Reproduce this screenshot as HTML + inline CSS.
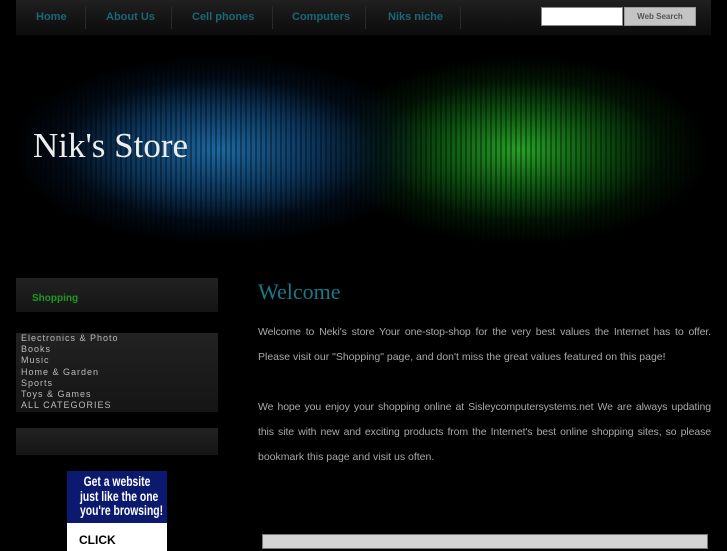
<!DOCTYPE html>
<html><head><meta charset="utf-8"><style>
*{margin:0;padding:0;box-sizing:border-box}
body{width:727px;height:545px;overflow:hidden;background:#000;font-family:"Liberation Sans",sans-serif;position:relative}
.nav{position:absolute;left:16px;top:0;width:695px;height:35px;background:linear-gradient(#202020,#161616 45%,#0c0c0c)}
.nav a{position:absolute;top:11px;font-size:11px;font-weight:bold;color:#1a6775;text-decoration:none}
.sep{position:absolute;top:6px;width:1px;height:23px;background:#2a2a2a}
.search{position:absolute;left:541px;top:7px;width:82px;height:19px;background:#fff;border:1px solid #888}
.btn{position:absolute;left:624px;top:7px;width:72px;height:19px;background:#c4c4c4;border:1px solid #999;font-size:8px;font-weight:bold;color:#555;text-align:center;line-height:17px}
.banner{position:absolute;left:20px;top:55px;width:690px;height:190px;
background:radial-gradient(ellipse 210px 95px at 200px 95px,rgba(30,110,170,.95),rgba(15,70,120,.75) 45%,rgba(5,30,60,.4) 75%,transparent 100%),
radial-gradient(ellipse 190px 95px at 500px 95px,rgba(40,170,40,.95),rgba(15,100,20,.75) 45%,rgba(5,50,10,.4) 75%,transparent 100%)}
.banner:after{content:"";position:absolute;inset:0;background:repeating-linear-gradient(90deg,rgba(0,0,0,.35) 0 2px,transparent 2px 5px)}
.title{position:absolute;left:33px;top:126px;font-family:"Liberation Serif",serif;font-size:35px;color:#eee}
.box{position:absolute;left:16px;width:202px;background:linear-gradient(#222 0,#1a1a1a 60%,#151515)}
.cat{position:absolute;left:21px;font-size:9px;color:#bbb;letter-spacing:1px}
h1{position:absolute;left:258px;top:279px;font-family:"Liberation Serif",serif;font-weight:normal;font-size:22px;color:#1a7888}
.l{position:absolute;left:258px;width:453px;font-size:10.5px;color:#a8a8a8;line-height:14px;white-space:nowrap}
.j{text-align:justify;text-align-last:justify;white-space:normal;letter-spacing:-0.1px}
.ad{position:absolute;left:67px;top:471px;width:100px;height:80px;background:#0b1a6e;overflow:hidden}
.ad span{position:absolute;left:0;top:3px;width:100px;color:#fff;font-weight:bold;font-size:14px;text-align:center;line-height:14.5px;transform:scaleX(.74);white-space:nowrap}
.ad div{position:absolute;left:0;top:52px;width:100px;height:30px;background:#fff;color:#000;font-size:12px;font-weight:bold;padding:10px 0 0 12px}
</style></head><body>
<div class="nav">
<a style="left:20px">Home</a><div class="sep" style="left:69px"></div>
<a style="left:90px">About Us</a><div class="sep" style="left:155px"></div>
<a style="left:176px">Cell phones</a><div class="sep" style="left:256px"></div>
<a style="left:276px">Computers</a><div class="sep" style="left:349px"></div>
<a style="left:372px">Niks niche</a><div class="sep" style="left:444px"></div>
</div>
<div class="search"></div><div class="btn">Web Search</div>
<div class="banner"></div>
<div class="title">Nik's Store</div>
<div class="box" style="top:278px;height:34px"></div>
<div style="position:absolute;left:32px;top:293px;font-size:10px;font-weight:bold;color:#1e9a1e">Shopping</div>
<div class="box" style="top:333px;height:79px"></div>
<div class="cat" style="top:333px">Electronics &amp; Photo</div>
<div class="cat" style="top:344px">Books</div>
<div class="cat" style="top:355px">Music</div>
<div class="cat" style="top:367px">Home &amp; Garden</div>
<div class="cat" style="top:378px">Sports</div>
<div class="cat" style="top:389px">Toys &amp; Games</div>
<div class="cat" style="top:400px">ALL CATEGORIES</div>
<div class="box" style="top:428px;height:27px"></div>
<div class="ad"><span>Get a website<br>just like the one<br>you're browsing!</span><div>CLICK</div></div>
<h1>Welcome</h1>
<div class="l j" style="top:325px">Welcome to Neki's store Your one-stop-shop for the very best values the Internet has to offer.</div>
<div class="l" style="top:350px">Please visit our "Shopping" page, and don't miss the great values featured on this page!</div>
<div class="l j" style="top:400px">We hope you enjoy your shopping online at Sisleycomputersystems.net We are always updating</div>
<div class="l j" style="top:425px">this site with new and exciting products from the Internet's best online shopping sites, so please</div>
<div class="l" style="top:450px">bookmark this page and visit us often.</div>
<div style="position:absolute;left:262px;top:534px;width:446px;height:15px;background:#d4d4d4;border:1px solid #777"></div>
</body></html>
